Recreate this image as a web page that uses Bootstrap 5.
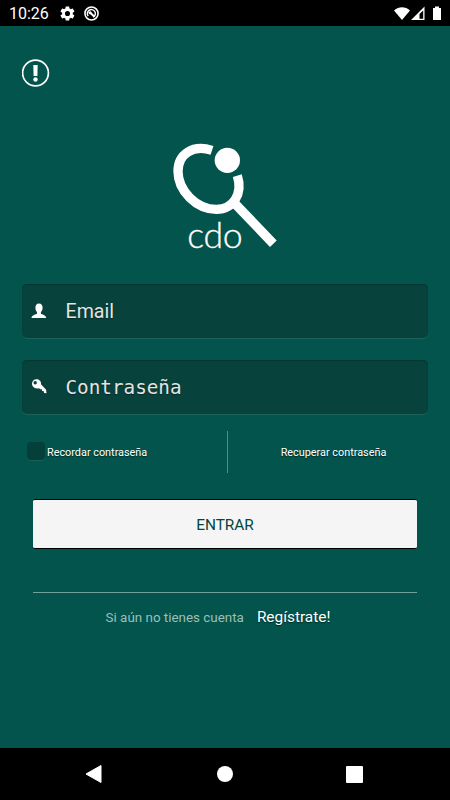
<!DOCTYPE html>
<html lang="es">
<head>
<meta charset="utf-8">
<meta name="viewport" content="width=device-width, initial-scale=1">
<title>cdo</title>
<link href="https://cdn.jsdelivr.net/npm/bootstrap@5.3.0/dist/css/bootstrap.min.css" rel="stylesheet">
<style>
body{background:#02544c;font-family:Roboto,"Liberation Sans",sans-serif;height:800px;overflow:hidden}
svg{display:block;flex:none}
.statusbar{height:26px;background:#000;font-size:16px;line-height:26px;padding:1px 8px 0 9px}
.gear{margin-left:10px}
.info-row{padding:33px 0 0 22px;height:104px}
.logo-row{height:154px;padding-left:160px}
.logo-word{font-family:Lato,sans-serif;font-weight:300;font-size:107px}
.field{height:54px;margin:0 22px 22px;padding-left:8px;background:#07423d;border-radius:5px;box-shadow:0 1px 0 #1b6259,inset 0 1px 1px #053630;color:#e4e4e1;font-size:19.6px;text-shadow:0 1px 1px #032a26}
.field-text{margin-left:17.500px;padding-top:2px}
.field-mono{font-family:"DejaVu Sans Mono",monospace;font-size:19.3px;padding-top:3px}
.options{height:42px;margin-top:-5px;font-size:10.85px;color:#fff;text-shadow:0 1px 1px #022c28}
.options-text{padding-top:2px}
.recover{padding-right:11px}
.remember{width:228px;padding-left:27px;border-right:1px solid #558c85}
.tick{width:18px;height:18px;border-radius:4px;background:#053f39;box-shadow:0 1px 0 #156057;margin:-2px 2px 0 0}
.enter{height:50px;margin:26px 33px 0;padding:3px 0 0;background:#f5f5f5;border:0;border-top:1px solid #000;border-bottom:1px solid #000;border-radius:2px;font-size:15.4px;color:#02463d}
.signup{margin:43px 33px 0;border-top:1px solid #72a099;padding-top:13px;color:#9dbfba;font-size:13.4px}
.signup-text{padding-right:14px}
.signup a{font-size:15.4px;color:#fff;text-shadow:0 1px 1px #022c28;margin-left:13px}
.navkeys{height:52px;background:#000;padding:0 86px 0 84px}
</style>
<script src="https://cdn.jsdelivr.net/npm/bootstrap@5.3.0/dist/js/bootstrap.bundle.min.js"></script>
</head>
<body class="m-0 d-flex flex-column">
<header class="statusbar d-flex align-items-center text-white flex-shrink-0">
  <span>10:26</span>
  <svg class="gear" width="17" height="17" viewBox="0 0 24 24" fill="#fff"><path d="M19.4 13c.1-.6.1-1.400 0-2l2.100-1.600c.2-.2.3-.5.1-.7l-2-3.400c-.1-.2-.4-.3-.6-.2l-2.500 1a8 8 0 0 0-1.700-1l-.4-2.600c0-.3-.2-.5-.5-.5h-4c-.2 0-.4.2-.5.5L9 5.100a8 8 0 0 0-1.700 1l-2.500-1c-.2-.1-.5 0-.6.2l-2 3.400c-.1.2-.1.500.1.700L4.500 11a7 7 0 0 0 0 2l-2.200 1.600c-.2.2-.2.500-.1.700l2 3.400c.1.200.4.300.6.200l2.500-1c.5.400 1.100.700 1.700 1l.4 2.600c0 .300.2.500.5.500h4c.2 0 .4-.2.500-.5l.4-2.600a8 8 0 0 0 1.700-1l2.500 1c.2.100.5 0 .6-.2l2-3.400c.1-.2.100-.5-.1-.7zM12 15.600a3.600 3.600 0 1 1 0-7.200 3.600 3.600 0 0 1 0 7.200z"/></svg>
  <svg class="ms-2" width="15" height="15" viewBox="0 0 16 16" fill="none" stroke="#fff"><circle cx="8" cy="8" r="7" stroke-width="1.700"/><path d="M4.500 10.800A4.300 4.300 0 1 1 10 11.800" stroke-width="1.500"/><path d="m6.300 7 4.900 4.500" stroke-width="2.200"/><circle cx="6.500" cy="7.200" r="1.700" fill="#fff" stroke="none"/></svg>
  <svg class="ms-auto" width="49" height="18" viewBox="0 0 49 18" fill="#fff"><path d="M1 5.500C6 1.200 12 1.200 17 5.500L9 15z"/><path fill-rule="evenodd" d="M18 15 31.500 1.500V15zM26.500 13.700h3.700V5.500L26.500 9z"/><path d="M40 3h2V1.500h4V3h2v12h-8z"/></svg>
</header>
<main class="flex-grow-1 d-flex flex-column">
  <div class="info-row"><svg width="28" height="28" viewBox="0 0 28 28"><circle cx="13.500" cy="14" r="12.900" fill="none" stroke="#fff" stroke-width="1.700"/><path d="M11.300 6h4.400l-.3 11h-3.800z" fill="#fff"/><circle cx="13.500" cy="20.500" r="2.200" fill="#fff"/></svg></div>
  <div class="logo-row"><svg width="130" height="130" viewBox="0 0 390 390"><g fill="none" stroke="#fff" stroke-width="28"><path d="M156 61C98 42 54 73 54 124C54 183 110 238 169 238C220 238 249 192 232 137"/><path d="M223 219 340 341"/></g><circle cx="202" cy="91" r="38" fill="#fff"/><text class="logo-word" x="82" y="355" textLength="166" fill="#fff" stroke="#fff" stroke-width="1">cdo</text></svg></div>
  <div class="field d-flex align-items-center"><svg width="18" height="18" viewBox="0 0 18 18" fill="#fff"><path d="M9 1.500c2.400 0 3.600 1.700 3.600 4 0 2-.7 3.500-1.700 4.500v1.400c.7 1.100 5.300 1.300 5.300 4.600H1.500c0-3.300 4.900-3.500 5.500-4.600V10C6 9 5.400 7.500 5.400 5.500c0-2.300 1.200-4 3.600-4z"/></svg><span class="field-text">Email</span></div>
  <div class="field d-flex align-items-center"><svg width="18" height="18" viewBox="0 0 18 18" fill="#fff"><path fill-rule="evenodd" d="M6.400 1.200c2.800 0 5 2 4.600 5l5.100 5.600.4 3.500-2.400-.4-.3-1.700-1.700-.2-.3-1.700-1.800-.1-.8-1C5 11.500 2 9 2 5.600c0-2.500 2-4.400 4.400-4.400zM5.200 3a1.700 1.700 0 1 0 0 3.400 1.700 1.700 0 0 0 0-3.400z"/></svg><span class="field-text field-mono">Contraseña</span></div>
  <div class="options d-flex">
    <div class="remember d-flex align-items-center"><span class="tick"></span><span class="options-text">Recordar contraseña</span></div>
    <div class="flex-fill d-flex align-items-center justify-content-center"><span class="options-text recover">Recuperar contraseña</span></div>
  </div>
  <button class="enter" type="button">ENTRAR</button>
  <div class="signup d-flex justify-content-center align-items-start"><div class="signup-text d-flex align-items-baseline"><span>Si aún no tienes cuenta</span><a class="text-decoration-none" href="#">Regístrate!</a></div></div>
</main>
<footer class="navkeys d-flex align-items-center justify-content-between flex-shrink-0">
  <svg width="20" height="20" viewBox="0 0 20 20"><path d="M2 10 17 1.500v17z" fill="#fff" stroke="#fff" stroke-linejoin="round"/></svg>
  <svg width="18" height="18"><circle cx="9" cy="9" r="8" fill="#fff"/></svg>
  <svg width="19" height="19"><rect x="1" y="1" width="17" height="17" rx="1" fill="#fff"/></svg>
</footer>
</body>
</html>
